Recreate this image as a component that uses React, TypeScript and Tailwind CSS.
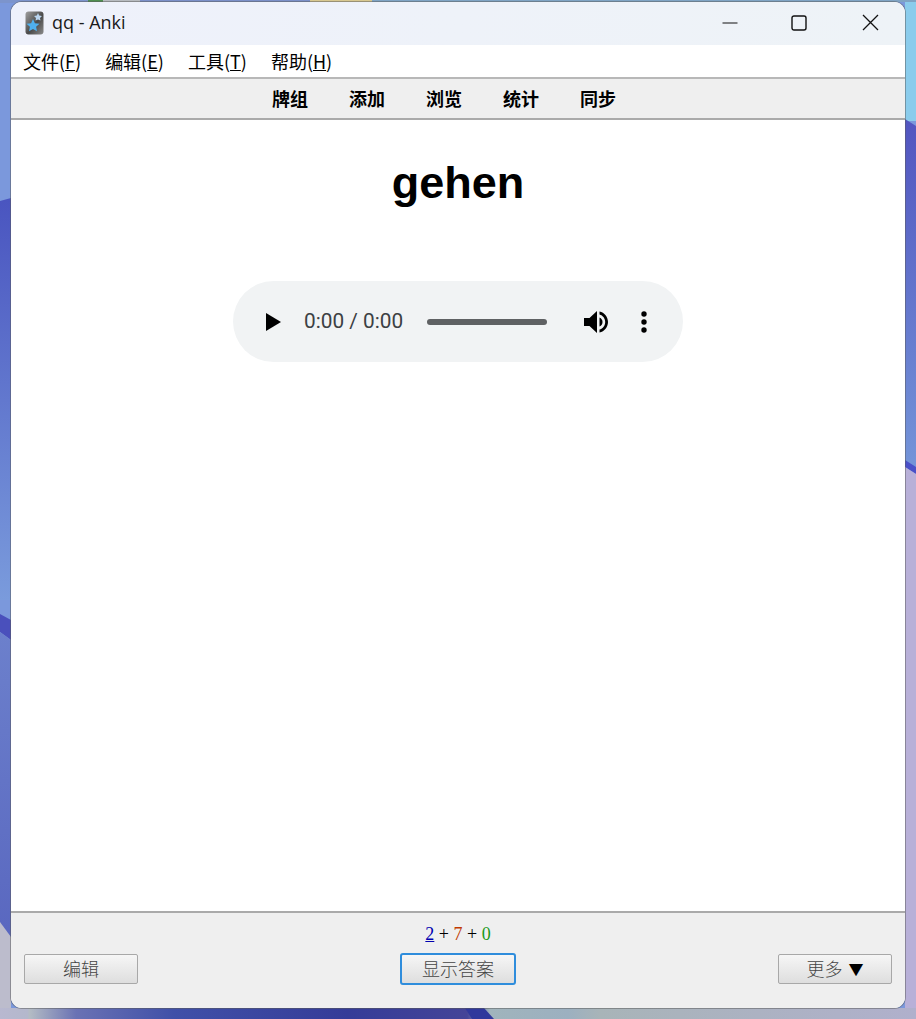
export default function App() {
  const cjk = '"Noto Sans CJK SC", "Liberation Sans", sans-serif';
  return (
    <div className="relative w-[916px] h-[1019px] overflow-hidden pt-[2px] pl-[11px]">
      <svg className="absolute inset-0" width="916" height="1019" viewBox="0 0 916 1019">
        <defs>
          <linearGradient id="l1" x1="0" y1="200" x2="0" y2="600" gradientUnits="userSpaceOnUse">
            <stop offset="0" stopColor="#4a55c0" />
            <stop offset="1" stopColor="#7a9bdc" />
          </linearGradient>
          <linearGradient id="l2" x1="0" y1="632" x2="0" y2="930" gradientUnits="userSpaceOnUse">
            <stop offset="0" stopColor="#6c80cc" />
            <stop offset="1" stopColor="#5a68c0" />
          </linearGradient>
          <linearGradient id="r1" x1="0" y1="120" x2="0" y2="460" gradientUnits="userSpaceOnUse">
            <stop offset="0" stopColor="#5255c0" />
            <stop offset="1" stopColor="#7393d8" />
          </linearGradient>
          <linearGradient id="b1" x1="0" y1="0" x2="916" y2="0" gradientUnits="userSpaceOnUse">
            <stop offset="0" stopColor="#b8b8d0" />
            <stop offset="0.03" stopColor="#b4b8cc" />
            <stop offset="0.032" stopColor="#b4bcc4" />
            <stop offset="0.083" stopColor="#6a72b4" />
            <stop offset="0.19" stopColor="#4050a8" />
            <stop offset="0.38" stopColor="#353c98" />
            <stop offset="0.51" stopColor="#444498" />
            <stop offset="0.535" stopColor="#a0b4bc" />
            <stop offset="0.62" stopColor="#9cb0c0" />
            <stop offset="0.655" stopColor="#a8b4b8" />
            <stop offset="1" stopColor="#b0b0cc" />
          </linearGradient>
        </defs>
        <rect width="916" height="1019" fill="#7b98dc" />
        <polygon points="0,201 11,198 11,600 0,600" fill="url(#l1)" />
        <polygon points="0,614 11,620 11,640 0,632" fill="#4a50bc" />
        <polygon points="0,632 11,640 11,1019 0,1019" fill="url(#l2)" />
        <polygon points="0,922 11,937 11,1019 0,1019" fill="#bcbccc" />
        <rect x="905" y="0" width="11" height="121" fill="#8accec" />
        <polygon points="905,119 916,126 916,470 905,462" fill="url(#r1)" />
        <polygon points="905,460 916,467 916,474 905,467" fill="#4a50c8" />
        <polygon points="905,467 916,474 916,1019 905,1019" fill="#b8b0d8" />
        <rect x="0" y="1008" width="916" height="11" fill="url(#b1)" />
        <polygon points="465,1008 484,1008 494,1019 472,1019" fill="#30389c" />
        <rect x="0" y="0" width="88" height="3" fill="#7c94cc" />
        <rect x="88" y="0" width="15" height="3" fill="#4f8f50" />
        <rect x="103" y="0" width="37" height="3" fill="#b8bcc0" />
        <rect x="140" y="0" width="170" height="3" fill="#7b90c8" />
        <rect x="310" y="0" width="62" height="3" fill="#d8c890" />
        <rect x="372" y="0" width="544" height="2" fill="#7fa4c4" />
      </svg>
      <div
        className="relative flex flex-col w-[894px] h-[1006px] rounded-[11px] overflow-hidden bg-white shadow-[0_0_0_1px_rgba(90,90,90,0.5)]"
        style={{ fontFamily: cjk }}
      >
        <div className="flex items-center h-[43px] shrink-0 pb-[2px] bg-gradient-to-r from-[#eef1fb] to-[#eef3f7]">
          <svg className="ml-[14px] shrink-0" width="19" height="24" viewBox="0 0 19 24">
            <defs>
              <linearGradient id="ic" x1="0" y1="0" x2="1" y2="1">
                <stop offset="0" stopColor="#a0a0a0" />
                <stop offset="0.55" stopColor="#4a4a4a" />
                <stop offset="1" stopColor="#8c8c8c" />
              </linearGradient>
            </defs>
            <rect x="0.5" y="0.5" width="18" height="23" rx="3" fill="url(#ic)" />
            <polygon points="13,2 14.2,4.6 17,5 15,7 15.5,9.6 13,8.4 10.5,9.6 11,7 9,5 11.8,4.6" fill="#b9d4ee" />
            <polygon points="8,8 9.9,12.2 14.5,12.7 11.1,15.7 12,20.2 8,18 4,20.2 4.9,15.7 1.5,12.7 6.1,12.2" fill="#4fb0ee" />
          </svg>
          <span className="ml-[8px] text-[18px] text-[#1a1a1a]" style={{ fontFamily: '"Open Sans", "Noto Sans", sans-serif' }}>qq - Anki</span>
          <div className="ml-auto flex items-center pr-[26px]">
            <svg width="16" height="16" viewBox="0 0 16 16" fill="none" stroke="#111" strokeWidth="1.2"><path d="M0.5 8H15.5" /></svg>
            <svg className="ml-[53px]" width="16" height="16" viewBox="0 0 16 16" fill="none" stroke="#111" strokeWidth="1.4"><rect x="1" y="1" width="14" height="14" rx="2" /></svg>
            <svg className="ml-[55px]" width="17" height="17" viewBox="0 0 17 17" fill="none" stroke="#111" strokeWidth="1.3"><path d="M1 1L16 16M16 1L1 16" /></svg>
          </div>
        </div>
        <div className="flex items-center h-[32px] shrink-0 pb-[1px] bg-white text-[18px] text-black pl-[12px] gap-[24px] leading-none">
          <span>文件(<u>F</u>)</span>
          <span>编辑(<u>E</u>)</span>
          <span>工具(<u>T</u>)</span>
          <span>帮助(<u>H</u>)</span>
        </div>
        <div className="flex items-center justify-center h-[43px] shrink-0 bg-[#efefef] border-t-2 border-b-2 border-t-[#b8b8b8] border-b-[#aaaaaa] gap-[41px] text-[18px] font-bold text-black pr-[28px]">
          <span>牌组</span>
          <span>添加</span>
          <span>浏览</span>
          <span>统计</span>
          <span>同步</span>
        </div>
        <div className="flex-1 flex flex-col items-center bg-white">
          <h1 className="mt-[31px] text-[45px] leading-[63px] font-bold text-black" style={{ fontFamily: '"Liberation Sans", sans-serif' }}>gehen</h1>
          <div className="mt-[67px] flex items-center w-[450px] h-[81px] rounded-full bg-[#f1f3f4]">
            <svg className="ml-[33px] shrink-0" width="15" height="18" viewBox="0 0 15 18"><path d="M0 0L15 9L0 18Z" fill="#000" /></svg>
            <span className="ml-[23px] w-[123px] shrink-0 text-[20.8px] text-[#3c4043]" style={{ fontFamily: 'Roboto, "Liberation Sans", sans-serif' }}>0:00 / 0:00</span>
            <div className="w-[120px] h-[6px] shrink-0 rounded-full bg-[#5f6163]" />
            <svg className="ml-[37px] shrink-0" width="25" height="24" viewBox="0 0 25 24">
              <path d="M0 8H5.5L13 1V23L5.5 16H0Z" fill="#000" />
              <path d="M15.5 7.5C17.5 8.5 18.5 10 18.5 12C18.5 14 17.5 15.5 15.5 16.5Z" fill="#000" />
              <path d="M15.5 1.5C20.5 2.5 24 7 24 12C24 17 20.5 21.5 15.5 22.5V19.6C19 18.6 21.2 15.5 21.2 12C21.2 8.5 19 5.4 15.5 4.4Z" fill="#000" />
            </svg>
            <svg className="ml-[31px] shrink-0" width="8" height="22" viewBox="0 0 8 22" fill="#000">
              <circle cx="4" cy="3" r="2.7" />
              <circle cx="4" cy="11" r="2.7" />
              <circle cx="4" cy="19" r="2.7" />
            </svg>
          </div>
        </div>
        <div className="relative h-[97px] shrink-0 flex flex-col items-center bg-[#efefef] border-t-2 border-t-[#aaaaaa]">
          <div className="mt-[10px] h-[22px] text-[18px] leading-[22px] text-black" style={{ fontFamily: '"Liberation Serif", serif', whiteSpace: 'pre' }}>
            <u className="text-[#0000b0]">2</u> + <span className="text-[#c03a00]">7</span> + <span className="text-[#1a9a1a]">0</span>
          </div>
          <div className="mt-[8px] w-full flex items-center justify-between px-[13px]">
            <button className="w-[114px] h-[30px] pb-[2px] rounded-[2px] border border-[#a8a8a8] bg-gradient-to-b from-[#f6f6f6] to-[#dedede] text-[18px] leading-none font-light text-[#444]">编辑</button>
            <button className="w-[116px] h-[32px] pb-[2px] rounded-[3px] border-2 border-[#2f8ddc] bg-gradient-to-b from-[#f6f6f6] to-[#dedede] text-[18px] leading-none font-light text-[#444]">显示答案</button>
            <button className="flex items-center justify-center w-[114px] h-[30px] pb-[2px] rounded-[2px] border border-[#a8a8a8] bg-gradient-to-b from-[#f6f6f6] to-[#dedede] text-[18px] leading-none font-light text-[#444]">更多<span className="ml-[6px] text-black text-[15px]">▼</span></button>
          </div>
        </div>
      </div>
    </div>
  );
}
